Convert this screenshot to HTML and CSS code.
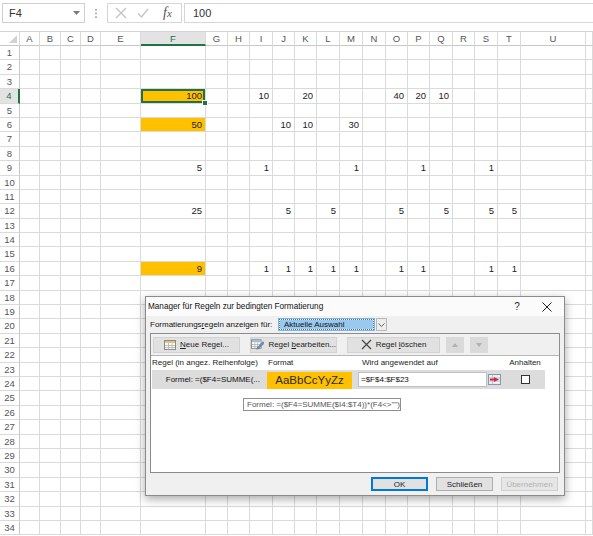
FILE: index.html
```html
<!DOCTYPE html>
<html lang="de">
<head>
  <meta charset="UTF-8">
  <meta name="viewport" content="width=device-width, initial-scale=1.0">
  <title>Bedingte Formatierung</title>
  <link rel="stylesheet" href="styles.css">
</head>
<body>

    <div class="formula-bar">
        <div class="name-box">
            <span>F4</span>
            <svg width="7" height="4" viewBox="0 0 7 4"><path d="M0 0 L7 0 L3.5 4 Z" fill="#7a7a7a"/></svg>
        </div>
        <div class="grip">
            <svg width="2" height="9" viewBox="0 0 2 9"><rect x="0" y="0" width="2" height="1.5" fill="#a8a8a8"/><rect x="0" y="3.7" width="2" height="1.5" fill="#a8a8a8"/><rect x="0" y="7.4" width="2" height="1.5" fill="#a8a8a8"/></svg>
        </div>
        <div class="fx-box">
            <svg class="fx-cancel" width="12" height="12" viewBox="0 0 12 12"><path d="M1 1 L11 11 M11 1 L1 11" stroke="#c4c4c4" stroke-width="1.4"/></svg>
            <svg class="fx-enter" width="12" height="10" viewBox="0 0 12 10"><path d="M1 5.5 L4.5 9 L11 1" stroke="#c4c4c4" stroke-width="1.4" fill="none"/></svg>
            <span class="fx-label">f<span class="fx-x">x</span></span>
        </div>
        <div class="formula">100</div>
    </div>

    <div class="sheet" id="sheet"></div>

    <div class="dialog">
        <div class="dlg-title">
            <span class="dlg-caption">Manager für Regeln zur bedingten Formatierung</span>
            <span class="dlg-help">?</span>
            <span class="dlg-close">
                <svg width="10" height="10" viewBox="0 0 10 10"><path d="M0.5 0.5 L9.5 9.5 M9.5 0.5 L0.5 9.5" stroke="#222" stroke-width="1"/></svg>
            </span>
        </div>
        <div class="dlg-body">
            <div class="show-row">
                <span class="show-label">Formatierungs<u>r</u>egeln anzeigen für:</span>
                <div class="combo">
                    <span class="combo-text"><span class="combo-sel">Aktuelle Auswahl</span></span>
                    <span class="combo-btn">
                        <svg width="7" height="4" viewBox="0 0 7 4"><path d="M0.5 0.5 L3.5 3.5 L6.5 0.5" stroke="#666" stroke-width="1" fill="none"/></svg>
                    </span>
                </div>
            </div>

            <div class="rules-frame">
                <div class="toolbar">
                    <button class="tb-btn tb-new">
                        <svg width="12" height="10" viewBox="0 0 12 10"><rect x="0.5" y="0.5" width="11" height="9" fill="#fff" stroke="#8a8a8a"/><rect x="1" y="1" width="10" height="2" fill="#e8c070"/><path d="M1 5.5 H11 M1 7.5 H11 M4.5 3 V9.5 M8 3 V9.5" stroke="#b0b0b0" stroke-width="0.8"/></svg>
                        <span><u>N</u>eue Regel...</span>
                    </button>
                    <button class="tb-btn tb-edit">
                        <svg width="14" height="11" viewBox="0 0 14 11"><rect x="0.5" y="0.5" width="10" height="9" fill="#fff" stroke="#8a8a8a"/><rect x="1" y="1" width="9" height="2" fill="#9bb7d9"/><path d="M1 5.5 H10 M1 7.5 H10 M4 3 V9.5 M7 3 V9.5" stroke="#b0b0b0" stroke-width="0.8"/><path d="M6 10.5 L7 8 L12.5 2.5 L14 4 L8.5 9.5 Z" fill="#6d8fb8" stroke="#4a6a90" stroke-width="0.5"/></svg>
                        <span>Regel <u>b</u>earbeiten...</span>
                    </button>
                    <button class="tb-btn tb-delete">
                        <svg width="11" height="11" viewBox="0 0 11 11"><path d="M1 1 L10 10 M10 1 L1 10" stroke="#4a4a4a" stroke-width="1.3"/></svg>
                        <span>Regel <u>l</u>öschen</span>
                    </button>
                    <button class="tb-arrow">
                        <svg width="6" height="4" viewBox="0 0 6 4"><path d="M0 4 L3 0 L6 4 Z" fill="#b0b0b0"/></svg>
                    </button>
                    <button class="tb-arrow">
                        <svg width="6" height="4" viewBox="0 0 6 4"><path d="M0 0 L3 4 L6 0 Z" fill="#b0b0b0"/></svg>
                    </button>
                </div>

                <div class="rules-list">
                    <div class="rules-head">
                        <span>Regel (in angez. Reihenfolge)</span>
                        <span>Format</span>
                        <span>Wird angewendet auf</span>
                        <span class="col-stop">Anhalten</span>
                    </div>
                    <div class="rule-row">
                        <span class="rule-name">Formel: =($F4=SUMME(...</span>
                        <span class="rule-cell"><span class="rule-preview">AaBbCcYyZz</span></span>
                        <span class="rule-range">
                            <span class="range-input">=$F$4:$F$23</span>
                            <span class="range-btn">
                                <svg width="13" height="11" viewBox="0 0 13 11"><rect x="0.5" y="0.5" width="12" height="10" fill="#e9eef5" stroke="#8a95a5"/><path d="M0.5 4 H12.5 M0.5 7 H12.5 M4.5 0.5 V10.5" stroke="#a9b4c4" stroke-width="0.7"/><path d="M6 3 L11 5.5 L6 8 Z" fill="#d8283a"/><rect x="2" y="4.5" width="4" height="2" fill="#d8283a"/></svg>
                            </span>
                        </span>
                        <span class="rule-stop"><span class="checkbox"></span></span>
                    </div>
                </div>
            </div>

            <div class="dlg-footer">
                <button class="dlg-btn dlg-ok">OK</button>
                <button class="dlg-btn">Schließen</button>
                <button class="dlg-btn" disabled>Übernehmen</button>
            </div>
        </div>
        <div class="tooltip">Formel: =($F4=SUMME($I4:$T4))*(F4&lt;&gt;"")</div>
    </div>

<script>

    const columns = ['', 'A', 'B', 'C', 'D', 'E', 'F', 'G', 'H', 'I', 'J', 'K',
                     'L', 'M', 'N', 'O', 'P', 'Q', 'R', 'S', 'T', 'U', ''];

    // Werte pro Zeile
    const values = {
        4:  { F: 100, I: 10, K: 20, O: 40, P: 20, Q: 10 },
        6:  { F: 50, J: 10, K: 10, M: 30 },
        9:  { F: 5, I: 1, M: 1, P: 1, S: 1 },
        12: { F: 25, J: 5, L: 5, O: 5, Q: 5, S: 5, T: 5 },
        16: { F: 9, I: 1, J: 1, K: 1, L: 1, M: 1, O: 1, P: 1, S: 1, T: 1 }
    };

    const highlighted = ['F4', 'F6', 'F16'];

    function buildSheet() {
        const sheet = document.getElementById('sheet');

        for (let row = 0; row <= 34; row++) {
            columns.forEach(function (col, i) {
                const cell = document.createElement('div');

                if (row === 0) {
                    cell.className = 'col-head';
                    if (i === 0) cell.classList.add('corner');
                    if (col === 'F') cell.classList.add('active-head');
                    cell.textContent = col;
                } else if (i === 0) {
                    cell.className = 'row-head';
                    if (row === 4) cell.classList.add('active-head');
                    cell.textContent = row;
                } else {
                    cell.className = 'cell';
                    if (highlighted.includes(col + row)) cell.classList.add('filled');
                    if (col === 'F' && row === 4) cell.classList.add('selected');
                    if (values[row] && values[row][col] !== undefined) {
                        cell.textContent = values[row][col];
                    }
                }
                sheet.appendChild(cell);
            });
        }
    }

    document.addEventListener('DOMContentLoaded', buildSheet);

</script>
</body>
</html>
```

FILE: styles.css
```css
body {
    margin: 0;
    width: 593px;
    height: 536px;
    overflow: hidden;
    position: relative;
    background-color: white;
    font-family: "Liberation Sans", Arial, sans-serif;
    color: #222;
}

/* Bearbeitungsleiste */

.formula-bar {
    height: 31px;
    display: flex;
    align-items: flex-start;
    padding-top: 3px;
    box-sizing: border-box;
}

.name-box {
    margin-left: 2px;
    width: 83px;
    height: 20px;
    border: 1px solid #cfcfcf;
    box-sizing: border-box;
    display: flex;
    align-items: center;
    justify-content: space-between;
    padding: 0 4px 0 6px;
    font-size: 11px;
    color: #333;
}

.grip {
    width: 22px;
    height: 20px;
    display: flex;
    align-items: center;
    justify-content: center;
}

.fx-box {
    width: 75px;
    height: 20px;
    border: 1px solid #d6d6d6;
    box-sizing: border-box;
    display: flex;
    align-items: center;
    padding-left: 7px;
}

.fx-enter {
    margin-left: 10px;
}

.fx-label {
    margin-left: 14px;
    font-family: "Liberation Serif", serif;
    font-style: italic;
    font-size: 14px;
    color: #555;
}

.fx-x {
    font-size: 11px;
}

.formula {
    flex: 1;
    margin-left: 2px;
    height: 20px;
    border: 1px solid #d6d6d6;
    border-right: none;
    box-sizing: border-box;
    padding-left: 8px;
    line-height: 18px;
    font-size: 11px;
    color: #333;
}

/* Tabellenblatt */

.sheet {
    width: 593px;
    overflow: hidden;
    display: grid;
    grid-template-columns: 20px 20px 21px 20px 20px 40px 65px 22px 22px 23px 22px 22px 23px 23px 23px 22px 22px 23px 22px 23px 23px 65px 7px;
    grid-template-rows: 14px repeat(34, 14.4px);
    border-top: 1px solid #d4d4d4;
}

.sheet > div {
    box-sizing: border-box;
    border-right: 1px solid #dadada;
    border-bottom: 1px solid #dadada;
    font-size: 9.5px;
    overflow: hidden;
    white-space: nowrap;
}

.col-head {
    text-align: center;
    line-height: 13px;
    color: #555;
    border-bottom-color: #c8c8c8 !important;
}

.corner {
    position: relative;
}

.corner::after {
    content: "";
    position: absolute;
    right: 2px;
    bottom: 2px;
    border-left: 8px solid transparent;
    border-bottom: 8px solid #d2d2d2;
}

.row-head {
    text-align: center;
    line-height: 14px;
    color: #555;
    border-right-color: #c8c8c8 !important;
}

.active-head {
    background-color: #e3e3e3;
    color: #217346;
}

.col-head.active-head {
    border-bottom: 2px solid #217346 !important;
}

.row-head.active-head {
    border-right: 2px solid #217346 !important;
}

.cell {
    text-align: right;
    padding-right: 3px;
    line-height: 14px;
    color: #222;
}

.filled {
    background-color: #ffc000;
}

.selected {
    position: relative;
    overflow: visible !important;
    box-shadow: inset 0 0 0 2px #217346;
}

.selected::after {
    content: "";
    position: absolute;
    right: -3px;
    bottom: -3px;
    width: 4px;
    height: 4px;
    background-color: #217346;
    border: 1px solid white;
}

/* Dialog */

.dialog {
    position: absolute;
    left: 145px;
    top: 296px;
    width: 420px;
    height: 200px;
    box-sizing: border-box;
    background-color: #f0f0f0;
    border: 1px solid #8c8c8c;
    box-shadow: 0 3px 9px rgba(0, 0, 0, 0.35);
    font-size: 8px;
    white-space: nowrap;
}

.dlg-title {
    height: 19px;
    display: flex;
    align-items: center;
    padding-left: 2px;
    background-color: #fbfbfb;
}

.dlg-caption {
    flex: 1;
    font-size: 8.2px;
    color: #111;
}

.dlg-help {
    width: 20px;
    text-align: center;
    font-size: 10px;
    margin-right: 6px;
}

.dlg-close {
    width: 28px;
    display: flex;
    justify-content: center;
    margin-right: 3px;
}

.dlg-body {
    padding: 0 4px 0 4px;
}

.show-row {
    height: 17px;
    display: flex;
    align-items: center;
}

.show-label {
    width: 128px;
    color: #111;
}

.combo {
    display: flex;
    height: 13px;
}

.combo-text {
    width: 97px;
    box-sizing: border-box;
    border: 1px solid #7eb4ea;
    background-color: white;
    padding: 1px;
}

.combo-sel {
    display: block;
    height: 100%;
    background-color: #99c9ef;
    outline: 1px dotted #3a6ea5;
    padding-left: 4px;
    line-height: 9px;
    color: #111;
}

.combo-btn {
    width: 11px;
    margin-left: 1px;
    box-sizing: border-box;
    border: 1px solid #b8b8b8;
    background-color: #ececec;
    display: flex;
    align-items: center;
    justify-content: center;
}

.rules-frame {
    height: 140px;
    border: 1px solid #8c8c8c;
    box-sizing: border-box;
    display: flex;
    flex-direction: column;
}

.toolbar {
    height: 21px;
    display: flex;
    align-items: center;
    padding-left: 2px;
    gap: 10px;
}

.tb-btn {
    height: 16px;
    width: 87px;
    display: flex;
    align-items: center;
    justify-content: center;
    gap: 4px;
    border: 1px solid #d2d2d2;
    background-color: #e1e1e1;
    font-family: "Liberation Sans", Arial, sans-serif;
    font-size: 8px;
    color: #222;
    padding: 0;
    white-space: nowrap;
}

.tb-delete {
    width: 93px;
}

.tb-arrow {
    height: 16px;
    width: 18px;
    border: none;
    background-color: #dadada;
    display: flex;
    align-items: center;
    justify-content: center;
    padding: 0;
    margin-left: -4px;
}

.rules-list {
    flex: 1;
    background-color: white;
    border-top: 1px solid #b8b8b8;
}

.rules-head,
.rule-row {
    display: grid;
    grid-template-columns: 114px 92px 147px 40px;
    margin-left: 1px;
    width: 393px;
}

.rules-head {
    height: 14px;
    line-height: 14px;
    color: #222;
}

.rules-head span:nth-child(2) {
    padding-left: 2px;
}

.rules-head span:nth-child(3) {
    padding-left: 4px;
}

.col-stop {
    text-align: center;
}

.rule-row {
    height: 19px;
    background-color: #dcdcdc;
    align-items: center;
}

.rule-name {
    text-align: right;
    padding-right: 6px;
    color: #111;
}

.rule-cell {
    height: 100%;
    display: flex;
    align-items: flex-end;
}

.rule-preview {
    margin-left: 1px;
    width: 85px;
    height: 17px;
    background-color: #ffc000;
    text-align: center;
    line-height: 17px;
    font-size: 11.5px;
    color: #2a2a2a;
}

.rule-range {
    display: flex;
    align-items: center;
}

.range-input {
    width: 129px;
    height: 15px;
    box-sizing: border-box;
    border: 1px solid #c0c0c0;
    background-color: white;
    line-height: 13px;
    padding-left: 2px;
    color: #111;
}

.range-btn {
    width: 15px;
    display: flex;
    justify-content: center;
}

.rule-stop {
    display: flex;
    justify-content: center;
}

.checkbox {
    width: 9px;
    height: 9px;
    box-sizing: border-box;
    border: 1px solid #333;
    background-color: white;
}

.dlg-footer {
    display: flex;
    justify-content: flex-end;
    gap: 8px;
    padding-top: 4px;
    padding-right: 2px;
}

.dlg-btn {
    width: 57px;
    height: 14px;
    padding: 0;
    border: 1px solid #adadad;
    background-color: #e1e1e1;
    font-family: "Liberation Sans", Arial, sans-serif;
    font-size: 8px;
    color: #222;
}

.dlg-ok {
    border: 1px solid #0078d7;
    box-shadow: inset 0 0 0 1px #0078d7;
}

.dlg-btn:disabled {
    color: #b4b4b4;
    border-color: #cfcfcf;
    background-color: #e6e6e6;
}

.tooltip {
    position: absolute;
    left: 97px;
    top: 101px;
    width: 158px;
    height: 13px;
    box-sizing: border-box;
    border: 1px solid #8f8f8f;
    background-color: white;
    padding-left: 3px;
    line-height: 11px;
    font-size: 8px;
    color: #555;
}
```
